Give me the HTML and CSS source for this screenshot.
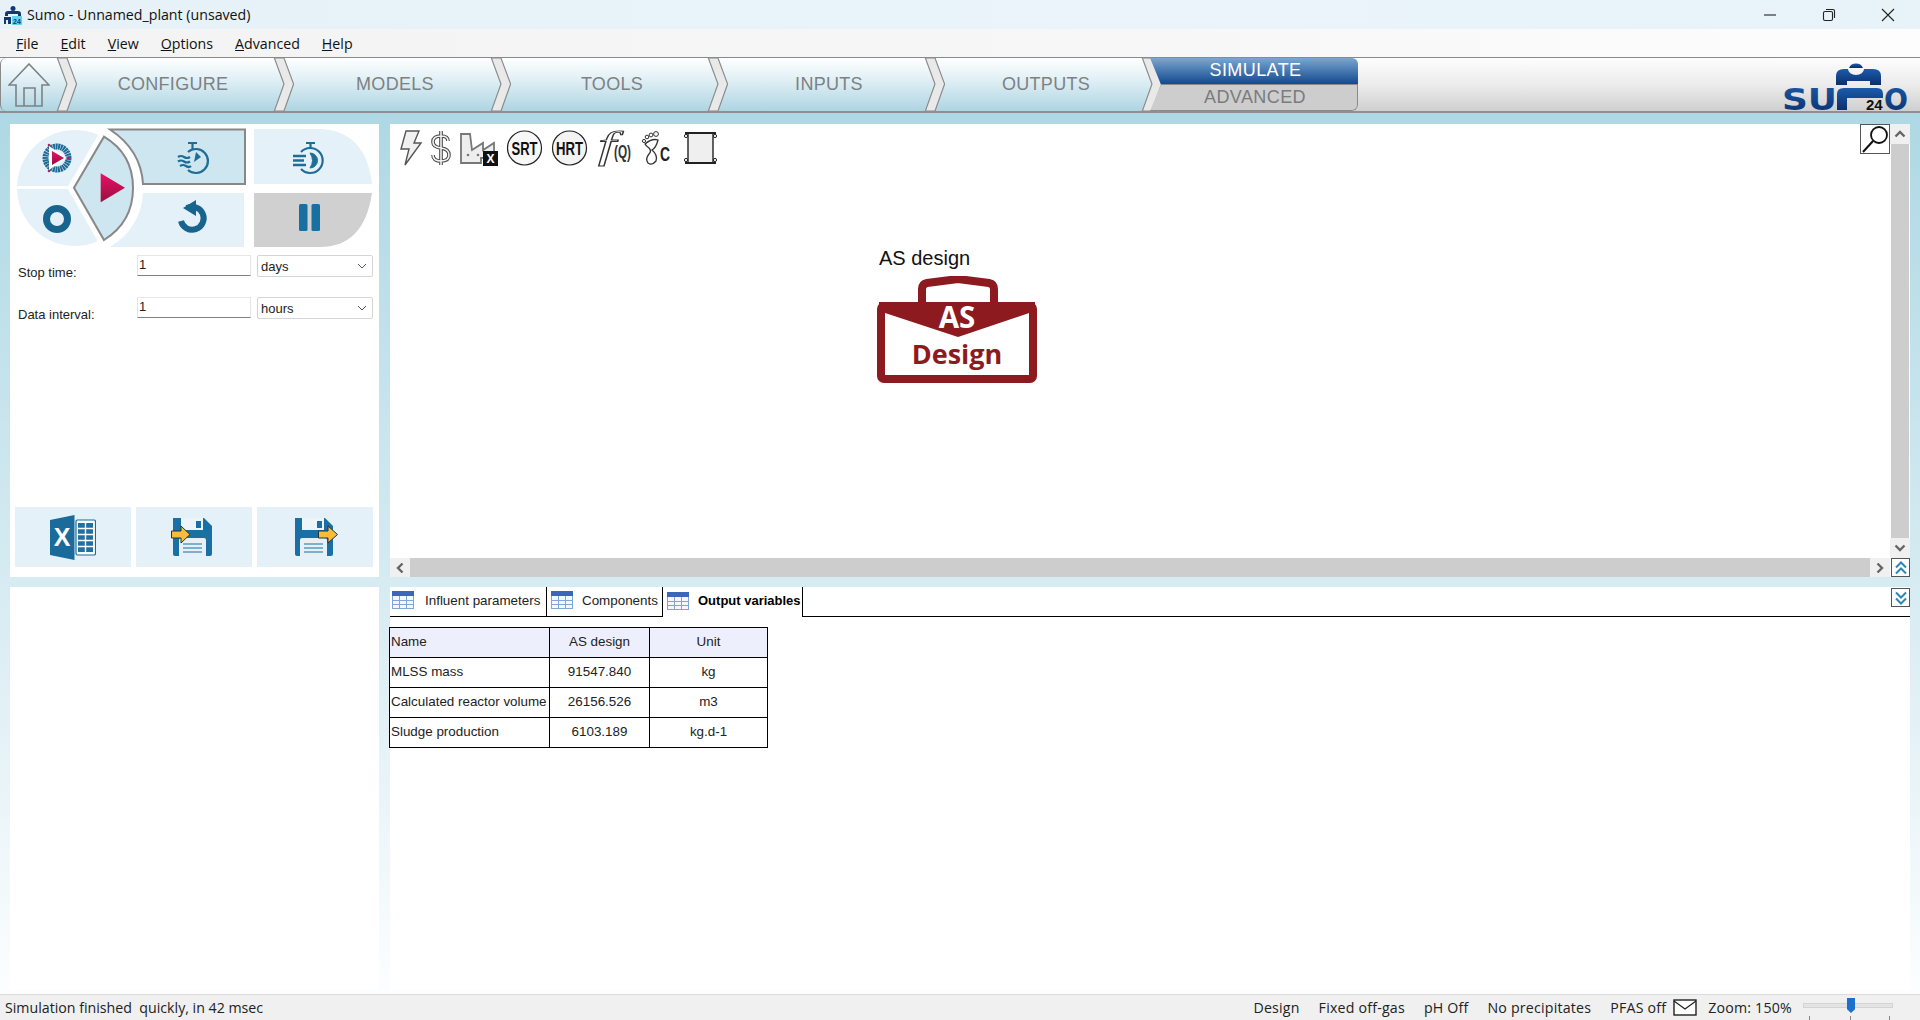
FILE: index.html
```html
<!DOCTYPE html>
<html lang="en">
<head>
    <meta charset="UTF-8">
    <title>Sumo - Unnamed_plant (unsaved)</title>
    <link rel="stylesheet" href="styles.css">
</head>
<body>
    <svg class="defs" width="0" height="0">
        <defs>
            <symbol id="chevron" viewBox="0 0 21 55">
                <path d="M1 0 L11 27 L1 55 H11 L21 27 L11 0 Z" fill="#e9e9e9" stroke="#8a8a8a" stroke-width="1.2"/>
            </symbol>
            <symbol id="grid" viewBox="0 0 22 18">
                <rect x="0.5" y="0.5" width="21" height="17" fill="#f4f8fd" stroke="#7fa6d6"/>
                <rect width="22" height="5" fill="#3c66b8"/>
                <path d="M7.5 5V18M14.5 5V18M0 9.5H22M0 13.5H22" stroke="#7fa6d6" fill="none"/>
            </symbol>
            <linearGradient id="playGrad" x1="0" y1="0" x2="0" y2="1">
                <stop offset="0" stop-color="#ea0f66"/>
                <stop offset="1" stop-color="#97103f"/>
            </linearGradient>
            <linearGradient id="logoGrad" x1="0" y1="0" x2="0" y2="1">
                <stop offset="0" stop-color="#1b5cab"/>
                <stop offset="1" stop-color="#0b2f6b"/>
            </linearGradient>
        </defs>
    </svg>

    <div class="titlebar">
        <svg class="app-icon" viewBox="0 0 20 20">
            <circle cx="10" cy="3.5" r="2.5" fill="#12386f"/>
            <path d="M2 9 Q2 6 5 6 H15 Q18 6 18 9 V11 H15 V9 H5 V11 H2Z" fill="#12386f"/>
            <path d="M1 12 H8 V19 H5 V15 H3 V19 H1Z" fill="#12386f"/>
            <rect x="9" y="11" width="10" height="9" fill="#5fd4ea"/>
            <text x="14" y="18.5" class="app-icon-num">24</text>
        </svg>
        <span class="title-text">Sumo - Unnamed_plant (unsaved)</span>
        <div class="window-btns">
            <svg width="14" height="14" viewBox="0 0 14 14"><path d="M1 7H13" stroke="#222" stroke-width="1.1"/></svg>
            <svg width="14" height="14" viewBox="0 0 14 14"><rect x="1.5" y="3.5" width="9" height="9" rx="1.5" fill="none" stroke="#222" stroke-width="1.1"/><path d="M4 1.5H11Q12.5 1.5 12.5 3V10" fill="none" stroke="#222" stroke-width="1.1"/></svg>
            <svg width="14" height="14" viewBox="0 0 14 14"><path d="M1 1L13 13M13 1L1 13" stroke="#222" stroke-width="1.1"/></svg>
        </div>
    </div>

    <div class="menubar">
        <a class="menu-item"><u>F</u>ile</a>
        <a class="menu-item"><u>E</u>dit</a>
        <a class="menu-item"><u>V</u>iew</a>
        <a class="menu-item"><u>O</u>ptions</a>
        <a class="menu-item"><u>A</u>dvanced</a>
        <a class="menu-item"><u>H</u>elp</a>
    </div>

    <nav class="nav">
        <div class="steps">
            <div class="home">
                <svg width="42" height="44" viewBox="0 0 42 44" fill="none" stroke="#7d8184" stroke-width="1.6">
                    <path d="M1 22 L21 1 L41 22 H34 V43 H8 V22 Z"/>
                    <path d="M16 43 V25 H27 V43"/>
                </svg>
            </div>
            <div class="step step-first"><svg class="chev"><use href="#chevron"/></svg><span class="step-label">CONFIGURE</span></div>
            <div class="step"><svg class="chev"><use href="#chevron"/></svg><span class="step-label">MODELS</span></div>
            <div class="step"><svg class="chev"><use href="#chevron"/></svg><span class="step-label">TOOLS</span></div>
            <div class="step"><svg class="chev"><use href="#chevron"/></svg><span class="step-label">INPUTS</span></div>
            <div class="step"><svg class="chev"><use href="#chevron"/></svg><span class="step-label">OUTPUTS</span></div>
            <svg class="chev"><use href="#chevron"/></svg>
        </div>
        <div class="sim-tab">
            <div class="sim-on">SIMULATE</div>
            <div class="sim-off">ADVANCED</div>
        </div>
        <svg class="logo" width="126" height="50" viewBox="0 0 126 50">
            <text x="0" y="49" class="logo-text" textLength="55" lengthAdjust="spacingAndGlyphs">SU</text>
            <text x="102" y="49" class="logo-text" textLength="24" lengthAdjust="spacingAndGlyphs">O</text>
            <path d="M67 7 A7.5 7 0 0 1 81 7 Z" fill="url(#logoGrad)"/>
            <path d="M54 24 V15 Q54 8 62 8 H66 A8 6 0 0 0 82 8 H91 Q99 8 99 15 V24 H88 V20 H65 V24 Z" fill="url(#logoGrad)"/>
            <path d="M55 49 V33 Q55 27 62 27 H95 Q101 27 101 33 V37 H65 V49 Z" fill="url(#logoGrad)"/>
            <text x="84" y="49" class="logo-num">24</text>
        </svg>
    </nav>

    <main class="workspace">
        <section class="panel side-top">
            <svg class="pad" width="369" height="125" viewBox="0 0 369 125">
                <!-- left disc -->
                <path d="M7 62 A58 58 0 0 1 95 14.4 L95 62 Z" fill="#e4f1f8"/>
                <path d="M7 65 A58 58 0 0 0 95 113.6 L95 65 Z" fill="#e4f1f8"/>
                <!-- other buttons -->
                <path d="M100 5.5 H235 V60 H133 Q131 26 100 5.5 Z" fill="#cde6ef" stroke="#888" stroke-width="2"/>
                <path d="M244 5 H310 Q356 7 362 60 H244 Z" fill="#e4f1f8"/>
                <path d="M133 69 H234 V123 H100 Q131 104 133 69 Z" fill="#e4f1f8"/>
                <path d="M244 69 H362 Q354 123 310 123 H244 Z" fill="#d0d0d0"/>
                <!-- run sector -->
                <path d="M64 63.7 L94 12.7 Q123 30 123 64 Q123 98 94 116 Z" fill="#fff" stroke="#fff" stroke-width="12"/>
                <path d="M64 63.7 L94 12.7 Q123 30 123 64 Q123 98 94 116 Z" fill="#cde6ef" stroke="#888" stroke-width="2"/>
                <path d="M90.7 49.3 L115 63.7 L90.7 78.3 Z" fill="url(#playGrad)"/>
                <!-- start from state -->
                <circle cx="47" cy="34" r="11.5" fill="none" stroke="#1f6a96" stroke-width="6" stroke-dasharray="2 0.5"/>
                <path d="M39 22 L57 34 L39 46 Z" fill="#fff"/>
                <path d="M42 27 L54 34 L42 41 Z" fill="url(#playGrad)"/>
                <circle cx="39" cy="21" r="1.3" fill="#c5185d"/><circle cx="58" cy="34" r="1.3" fill="#c5185d"/><circle cx="39" cy="47" r="1.3" fill="#c5185d"/>
                <!-- stop -->
                <circle cx="47" cy="95" r="10.5" fill="none" stroke="#17648f" stroke-width="7"/>
                <!-- fast timer -->
                <g fill="none" stroke="#1f6d96" stroke-width="2.2">
                    <path d="M178 28 A12 12 0 1 1 178 46"/>
                    <path d="M178 19H187M182.5 19V25"/>
                    <path d="M168 33 Q171 31 174 33 T180 33M168 37.5 Q171 35.5 174 37.5 T180 37.5M170 42 Q173 40 176 42 T181 42"/>
                </g>
                <path d="M184 38 L186 28 L191 33 Z" fill="#1f6d96"/>
                <!-- steady timer -->
                <g fill="none" stroke="#1f6d96" stroke-width="2.2">
                    <path d="M291 28 A12.5 12.5 0 1 1 291 45"/>
                    <path d="M296 19H305M300.5 19V24"/>
                </g>
                <path d="M283 32H296M283 36.5H294M283 41H296" stroke="#1f6d96" stroke-width="2.6"/>
                <path d="M300 29 A7.5 7.5 0 0 1 300 44 Q305 36.5 300 29 Z" fill="#1f6d96" stroke="#1f6d96" stroke-width="1"/>
                <!-- reset -->
                <path d="M177 84 A11.5 11.5 0 1 1 171 97" fill="none" stroke="#17648f" stroke-width="6"/>
                <path d="M186 76 V92 L173 84 Z" fill="#17648f"/>
                <!-- pause -->
                <rect x="289" y="80" width="8.5" height="27" rx="1.5" fill="#17709f"/>
                <rect x="301.5" y="80" width="8.5" height="27" rx="1.5" fill="#17709f"/>
            </svg>

            <div class="sim-form">
                <label class="form-label">Stop time:</label>
                <input class="form-input" type="text" value="1">
                <div class="form-select">days<svg width="10" height="6" viewBox="0 0 10 6"><path d="M1 1L5 5L9 1" fill="none" stroke="#555"/></svg></div>
                <label class="form-label">Data interval:</label>
                <input class="form-input" type="text" value="1">
                <div class="form-select">hours<svg width="10" height="6" viewBox="0 0 10 6"><path d="M1 1L5 5L9 1" fill="none" stroke="#555"/></svg></div>
            </div>

            <div class="export-row">
                <div class="export-btn">
                    <svg width="46" height="45" viewBox="0 0 46 45">
                        <rect x="26" y="5" width="19.5" height="35" rx="1.5" fill="#fff" stroke="#1a6a9c" stroke-width="1.2"/>
                        <rect x="28" y="8" width="15" height="29" fill="#1f6fa3"/>
                        <path d="M35.5 8V37M28 13.5H43M28 19.5H43M28 25.5H43M28 31.5H43" stroke="#fff" stroke-width="1.4"/>
                        <path d="M0 5 L24.5 0 V45 L0 40 Z" fill="#1a6a9c"/>
                        <text x="12" y="31" class="xl-letter">X</text>
                    </svg>
                </div>
                <div class="export-btn">
                    <svg width="46" height="38" viewBox="0 0 46 38">
                        <path d="M2 0 H33 L41 8 V36 Q41 38 39 38 H4 Q2 38 2 36 Z" fill="#1a70a5"/>
                        <rect x="10" y="0" width="22" height="12" fill="#eef5f9"/>
                        <rect x="25" y="3" width="5" height="7" fill="#1a70a5"/>
                        <path d="M8 38 V22 Q8 20 10 20 H33 Q35 20 35 22 V38 Z" fill="#e6f0f6"/>
                        <path d="M12 26H31M12 30H31M12 34H31" stroke="#5a9cc0" stroke-width="1.5"/>
                        <path d="M0.5 13 H10 V8 L19 16.5 L10 25 V20 H0.5 Z" fill="#f5bd3a" stroke="#234" stroke-width="1"/>
                    </svg>
                </div>
                <div class="export-btn">
                    <svg width="46" height="38" viewBox="0 0 46 38">
                        <path d="M3 0 H33 L41 8 V36 Q41 38 39 38 H5 Q3 38 3 36 Z" fill="#1a70a5"/>
                        <rect x="10" y="0" width="22" height="12" fill="#eef5f9"/>
                        <rect x="25" y="3" width="5" height="7" fill="#1a70a5"/>
                        <path d="M8 38 V22 Q8 20 10 20 H33 Q35 20 35 22 V38 Z" fill="#e6f0f6"/>
                        <path d="M12 26H31M12 30H31M12 34H31" stroke="#5a9cc0" stroke-width="1.5"/>
                        <path d="M26.5 13 H36 V8 L45.5 16.5 L36 25 V20 H26.5 Z" fill="#f5bd3a" stroke="#234" stroke-width="1"/>
                    </svg>
                </div>
            </div>
        </section>

        <section class="panel main-pane">
            <div class="canvas">
                <div class="toolbar">
                    <svg width="23" height="36" viewBox="0 0 23 36"><path d="M7 1 H20 L15 13 H22 L6 35 L10 19 H2 Z" fill="#f0f0f0" stroke="#555" stroke-width="1.4"/></svg>
                    <svg width="22" height="36" viewBox="0 0 22 36"><path d="M11 1V35M18 11 Q18 6 11 6 Q3 6 3 12 Q3 17 11 18 Q19 19 19 25 Q19 31 11 31 Q3 31 3 25" fill="none" stroke="#444" stroke-width="3.6"/><path d="M11 1V35M18 11 Q18 6 11 6 Q3 6 3 12 Q3 17 11 18 Q19 19 19 25 Q19 31 11 31 Q3 31 3 25" fill="none" stroke="#f2f2f2" stroke-width="1.6"/></svg>
                    <svg width="38" height="36" viewBox="0 0 38 36">
                        <path d="M1 4 H10 L12 20 L23 13 V20 L34 13 V28 H21 V33 H1 Z" fill="#eee" stroke="#777" stroke-width="1.8"/>
                        <circle cx="8" cy="25" r="1.3" fill="#777"/><circle cx="18" cy="25" r="1.3" fill="#777"/>
                        <rect x="23" y="21" width="15" height="15" fill="#111"/>
                        <text x="30.5" y="33" class="factory-x">X</text>
                    </svg>
                    <svg width="37" height="36" viewBox="0 0 37 36"><circle cx="18.5" cy="18" r="17" fill="#f7f7f7" stroke="#222" stroke-width="1.2"/><text x="5.5" y="25" class="ring-text" textLength="26" lengthAdjust="spacingAndGlyphs">SRT</text></svg>
                    <svg width="37" height="36" viewBox="0 0 37 36"><circle cx="18.5" cy="18" r="17" fill="#f3f3f3" stroke="#222" stroke-width="1.2"/><text x="5" y="25" class="ring-text" textLength="27" lengthAdjust="spacingAndGlyphs">HRT</text></svg>
                    <svg width="37" height="36" viewBox="0 0 37 36"><text x="2" y="28" class="fq-f" textLength="18" lengthAdjust="spacingAndGlyphs">f</text><text x="18" y="28" class="fq-q" textLength="17" lengthAdjust="spacingAndGlyphs">(Q)</text></svg>
                    <svg width="31" height="36" viewBox="0 0 31 36">
                        <g fill="#fff" stroke="#333"><circle cx="3" cy="11" r="1.6"/><circle cx="6" cy="7" r="1.8"/><circle cx="10" cy="5" r="1.9"/><circle cx="15" cy="4" r="2.4"/></g>
                        <path d="M4 14 Q11 8 17 10 Q15 18 11 20 Q17 25 15 31 Q11 36 7 33 Q4 29 8 24 Q11 21 8 18 Q5 16 4 14 Z" fill="#fff" stroke="#333" stroke-width="1.3"/>
                        <text x="19" y="31" class="foot-c" textLength="10" lengthAdjust="spacingAndGlyphs">C</text>
                    </svg>
                    <svg width="38" height="36" viewBox="0 0 38 36">
                        <rect x="8" y="3" width="25" height="30" fill="#efefef" stroke="#222" stroke-width="1.4"/>
                        <path d="M5 3H36M5 33H36" stroke="#222" stroke-width="2"/>
                        <circle cx="6" cy="6" r="1.6" fill="#fff" stroke="#222"/><circle cx="35" cy="6" r="1.6" fill="#fff" stroke="#222"/>
                        <circle cx="6" cy="30" r="1.6" fill="#fff" stroke="#222"/><circle cx="35" cy="30" r="1.6" fill="#fff" stroke="#222"/>
                    </svg>
                </div>

                <div class="node">
                    <span class="node-label">AS design</span>
                    <svg width="160" height="107" viewBox="0 0 160 107">
                        <path d="M45 27 V13 Q45 8 50 7 L81 3 L112 7 Q117 8 117 13 V27" fill="none" stroke="#8c1a1e" stroke-width="8"/>
                        <rect x="4" y="30" width="152" height="73" rx="3" fill="#fff" stroke="#8c1a1e" stroke-width="8"/>
                        <path d="M2 26 H158 V35 L81 61 L2 35 Z" fill="#8c1a1e"/>
                        <text x="80" y="52" class="as-top">AS</text>
                        <text x="80" y="88" class="as-bottom">Design</text>
                    </svg>
                </div>

                <div class="magnifier">
                    <svg width="28" height="28" viewBox="0 0 28 28"><circle cx="18" cy="10" r="8" fill="none" stroke="#111" stroke-width="1.8"/><path d="M12 16 L2 27" stroke="#111" stroke-width="2"/></svg>
                </div>
            </div>
            <div class="vscroll">
                <div class="arrow-cell"><svg width="12" height="8" viewBox="0 0 12 8"><path d="M1.5 6.5L6 2L10.5 6.5" fill="none" stroke="#666" stroke-width="2.4"/></svg></div>
                <div class="vthumb"></div>
                <div class="arrow-cell"><svg width="12" height="8" viewBox="0 0 12 8"><path d="M1.5 1.5L6 6L10.5 1.5" fill="none" stroke="#666" stroke-width="2.4"/></svg></div>
            </div>
            <div class="hscroll">
                <div class="arrow-cell"><svg width="8" height="12" viewBox="0 0 8 12"><path d="M6.5 1.5L2 6L6.5 10.5" fill="none" stroke="#666" stroke-width="2.4"/></svg></div>
                <div class="hthumb"></div>
                <div class="arrow-cell"><svg width="8" height="12" viewBox="0 0 8 12"><path d="M1.5 1.5L6 6L1.5 10.5" fill="none" stroke="#666" stroke-width="2.4"/></svg></div>
            </div>
            <div class="pane-btn">
                <svg width="14" height="14" viewBox="0 0 14 14"><path d="M2 6.5L7 1.5L12 6.5M2 12.5L7 7.5L12 12.5" fill="none" stroke="#2b87b8" stroke-width="2"/></svg>
            </div>
        </section>

        <section class="panel side-bottom"></section>

        <section class="panel output-pane">
            <div class="tabs">
                <div class="tab tab-influent"><svg width="22" height="18"><use href="#grid"/></svg><span>Influent parameters</span></div>
                <div class="tab tab-components"><svg width="22" height="18"><use href="#grid"/></svg><span>Components</span></div>
                <div class="tab tab-outputs active"><svg width="22" height="18"><use href="#grid"/></svg><span>Output variables</span></div>
                <div class="tabs-line"></div>
            </div>
            <div class="pane-btn collapse-btn">
                <svg width="14" height="14" viewBox="0 0 14 14"><path d="M2 1.5L7 6.5L12 1.5M2 7.5L7 12.5L12 7.5" fill="none" stroke="#2b87b8" stroke-width="2"/></svg>
            </div>
            <table class="results">
                <tr class="head"><td class="name">Name</td><td>AS design</td><td>Unit</td></tr>
                <tr><td class="name">MLSS mass</td><td>91547.840</td><td>kg</td></tr>
                <tr><td class="name">Calculated reactor volume</td><td>26156.526</td><td>m3</td></tr>
                <tr><td class="name">Sludge production</td><td>6103.189</td><td>kg.d-1</td></tr>
            </table>
        </section>
    </main>

    <footer class="statusbar">
        <span>Simulation finished&nbsp; quickly, in 42 msec</span>
        <div class="status-right">
            <span>Design</span>
            <span>Fixed off-gas</span>
            <span>pH Off</span>
            <span>No precipitates</span>
            <span>PFAS off</span>
            <svg class="envelope" width="24" height="17" viewBox="0 0 24 17"><rect x="1" y="1" width="22" height="15" fill="#fff" stroke="#222" stroke-width="1.4"/><path d="M1 2L12 10L23 2" fill="none" stroke="#222" stroke-width="1.2"/></svg>
            <span class="zoom-text">Zoom: 150%</span>
            <div class="slider">
                <div class="slider-track"></div>
                <div class="slider-thumb"></div>
                <i class="tick tick-a"></i><i class="tick tick-b"></i><i class="tick tick-c"></i>
            </div>
        </div>
    </footer>
</body>
</html>
```

FILE: styles.css
```css
* {
    box-sizing: border-box;
}

html, body {
    margin: 0;
    height: 100%;
}

body {
    width: 1920px;
    height: 1020px;
    display: flex;
    flex-direction: column;
    overflow: hidden;
    font-family: "Liberation Sans", Arial, sans-serif;
    background: #fff;
    color: #111;
}

.defs {
    position: absolute;
}

/* window chrome */
.titlebar {
    height: 29px;
    flex: none;
    display: flex;
    align-items: center;
    padding-left: 3px;
    background: linear-gradient(90deg, #e6f1f8, #eaf4fa 60%, #e8f3f9);
    font-family: "Open Sans", sans-serif;
    font-size: 14.2px;
}

.app-icon {
    width: 20px;
    height: 20px;
    margin-right: 4px;
}

.app-icon-num {
    font: bold 7px "Liberation Sans", sans-serif;
    text-anchor: middle;
    fill: #12386f;
}

.window-btns {
    margin-left: auto;
    display: flex;
    gap: 45px;
    padding-right: 25px;
}

.menubar {
    height: 28px;
    flex: none;
    display: flex;
    align-items: center;
    padding-left: 16px;
    gap: 22px;
    background: linear-gradient(90deg, #f3f3f3, #f7f7f7 60%, #fdfdfd);
    font-family: "Open Sans", sans-serif;
    font-size: 14.2px;
}

/* workflow nav */
.nav {
    height: 56px;
    flex: none;
    display: flex;
    border-top: 1px solid #8a8a8a;
    border-bottom: 2px solid #8f8f8f;
    background: linear-gradient(#fdfdfd, #ececec 50%, #cfcfcf);
}

.steps {
    display: flex;
    background: linear-gradient(#ffffff, #e1f0f5 40%, #aed5e3);
}

.home {
    width: 56px;
    display: flex;
    align-items: center;
    justify-content: center;
    padding-left: 1px;
    border-left: 1px solid #8a8a8a;
    border-radius: 6px 0 0 6px;
}

.step {
    width: 217px;
    display: flex;
}

.chev {
    width: 21px;
    height: 53px;
    flex: none;
}

.step-label {
    flex: 1;
    padding-left: 6px;
    text-align: center;
    line-height: 53px;
    font-size: 18px;
    letter-spacing: 0.3px;
    color: #7d8184;
}

.step-first .step-label {
    padding-left: 0;
    padding-right: 4px;
}

.sim-tab {
    width: 208px;
    margin-left: -12px;
    display: flex;
    flex-direction: column;
    text-align: center;
    font-size: 18px;
    letter-spacing: 0.4px;
    border-radius: 0 6px 6px 0;
    overflow: hidden;
    clip-path: polygon(0 0, 100% 0, 100% 100%, 0 100%, 11px 50%);
}

.sim-on {
    height: 27px;
    line-height: 25px;
    padding-left: 3px;
    color: #fff;
    background: linear-gradient(#7ba6cf, #124a90);
}

.sim-off {
    flex: 1;
    line-height: 25px;
    padding-left: 3px;
    color: #7b7b7b;
    background: #cdcdcd;
    border-top: 1px solid #8a8a8a;
    border-right: 1px solid #8a8a8a;
    border-bottom: 1px solid #8a8a8a;
    border-radius: 0 0 6px 0;
}

.logo {
    margin-left: auto;
    margin-right: 12px;
    margin-top: 3px;
    overflow: visible;
}

.logo-text {
    font: bold 31px "DejaVu Sans", sans-serif;
    fill: url(#logoGrad);
}

.logo-num {
    font: bold 15px "Liberation Sans", sans-serif;
    fill: #111;
}

/* work area */
.workspace {
    flex: 1;
    min-height: 0;
    display: grid;
    grid-template-columns: 369px 1520px;
    grid-template-rows: 453px 1fr;
    column-gap: 11px;
    row-gap: 10px;
    padding: 11px 0 4px 10px;
    background: linear-gradient(#aed8e5, #d6ebf2 53%, #fbfdfe 98%);
}

.panel {
    background: #fff;
    min-height: 0;
}

.side-top {
    display: flex;
    flex-direction: column;
    padding: 0 5px 10px 0;
}

.pad {
    flex: none;
}

.sim-form {
    margin-top: 6px;
    padding-left: 8px;
    display: grid;
    grid-template-columns: 113px 114px 116px;
    grid-auto-rows: 22px;
    column-gap: 6px;
    row-gap: 20px;
    font-size: 13px;
}

.form-label {
    padding-top: 10px;
    line-height: 16px;
    white-space: nowrap;
    color: #222;
}

.form-input {
    height: 21px;
    width: 100%;
    padding: 0 1px 2px;
    border: 1px solid #e6e6e6;
    border-bottom: 1px solid #808080;
    font: 13px "Liberation Sans", sans-serif;
    color: #222;
    outline: none;
}

.form-select {
    display: flex;
    align-items: center;
    justify-content: space-between;
    padding: 0 5px 0 3px;
    border: 1px solid #d4d4d4;
    border-radius: 2px;
    color: #222;
}

.export-row {
    margin-top: auto;
    padding-left: 5px;
    display: flex;
    gap: 5px;
}

.export-btn {
    width: 116px;
    height: 60px;
    display: flex;
    align-items: center;
    justify-content: center;
    background: #e4f1f8;
}

.xl-letter {
    font: bold 25px "Liberation Sans", sans-serif;
    text-anchor: middle;
    fill: #fff;
}

/* main canvas */
.main-pane {
    display: grid;
    grid-template-columns: 1fr 20px;
    grid-template-rows: 1fr 19px;
}

.canvas {
    position: relative;
    overflow: hidden;
}

.toolbar {
    display: flex;
    gap: 8px;
    padding: 6px 0 0 9px;
}

.toolbar svg {
    flex: none;
    overflow: visible;
}

.factory-x {
    font: bold 12px "Liberation Sans", sans-serif;
    text-anchor: middle;
    fill: #fff;
}

.ring-text {
    font: bold 19px "Liberation Sans", sans-serif;
    fill: #111;
}

.fq-f {
    font: italic 38px "Liberation Serif", serif;
    fill: #fff;
    stroke: #333;
    stroke-width: 0.9px;
}

.fq-q {
    font: bold 19px "Liberation Sans", sans-serif;
    fill: #333;
}

.foot-c {
    font: bold 21px "Liberation Sans", sans-serif;
    fill: #222;
}

.node {
    position: absolute;
    left: 487px;
    top: 122px;
    display: flex;
    flex-direction: column;
    gap: 6px;
}

.node-label {
    margin-left: 2px;
    font-size: 20px;
    line-height: 24px;
    color: #111;
}

.as-top {
    font: bold 29.5px "Open Sans", sans-serif;
    text-anchor: middle;
    fill: #fff;
}

.as-bottom {
    font: bold 27px "Open Sans", sans-serif;
    text-anchor: middle;
    fill: #8c1a1e;
}

.magnifier {
    position: absolute;
    right: 0;
    top: 0;
    width: 30px;
    height: 30px;
    display: flex;
    align-items: center;
    justify-content: center;
    border: 1px solid #555;
    background: #fff;
}

.vscroll {
    display: flex;
    flex-direction: column;
}

.arrow-cell {
    flex: none;
    min-width: 20px;
    min-height: 20px;
    display: flex;
    align-items: center;
    justify-content: center;
    background: #f0f0f0;
}

.vthumb {
    flex: 1;
    margin: 0 1px;
    background: #cdcdcd;
}

.hscroll {
    display: flex;
    height: 19px;
}

.hscroll .arrow-cell {
    min-height: 19px;
}

.hthumb {
    flex: 1;
    background: #cdcdcd;
}

.pane-btn {
    width: 19px;
    height: 19px;
    margin-left: 1px;
    display: flex;
    align-items: center;
    justify-content: center;
    border: 1px solid #555;
    background: #fff;
}

/* output tables */
.output-pane {
    position: relative;
    padding-bottom: 10px;
}

.tabs {
    height: 30px;
    display: flex;
    font-size: 13.4px;
}

.tab {
    flex: none;
    display: flex;
    align-items: center;
    padding: 0 0 3px 4px;
    border-bottom: 1px solid #000;
    border-right: 1px solid #000;
    color: #222;
    white-space: nowrap;
}

.tab svg {
    flex: none;
}

.tab-influent {
    width: 157px;
    padding-left: 2px;
    gap: 11px;
}

.tab-components {
    width: 116px;
    gap: 9px;
}

.tab-outputs {
    width: 140px;
    gap: 9px;
}

.tab.active {
    border-bottom: none;
    font-weight: bold;
    font-size: 13px;
    color: #000;
}

.tabs-line {
    flex: 1;
    border-bottom: 1px solid #000;
}

.collapse-btn {
    position: absolute;
    right: 0;
    top: 1px;
}

.results {
    margin: 10px 0 0 -1px;
    width: 379px;
    table-layout: fixed;
    border-collapse: collapse;
    font-size: 13.4px;
    color: #222;
}

.results td {
    height: 30px;
    padding: 0 1px 2px;
    border: 1px solid #000;
    text-align: center;
    white-space: nowrap;
}

.results td:nth-child(1) {
    width: 160px;
}

.results td:nth-child(2) {
    width: 100px;
}

.results td.name {
    text-align: left;
}

.results .head td {
    background: #eeeffd;
}

/* status bar */
.statusbar {
    height: 26px;
    flex: none;
    display: flex;
    align-items: center;
    padding: 0 27px 0 5px;
    background: #f0f0f0;
    border-top: 1px solid #dcdcdc;
    font-family: "Open Sans", sans-serif;
    font-size: 14.2px;
    color: #222;
}

.status-right {
    margin-left: auto;
    display: flex;
    align-items: center;
    gap: 19px;
    letter-spacing: 0.2px;
}

.envelope {
    margin-left: -12px;
}

.zoom-text {
    margin-left: -8px;
}

.slider {
    position: relative;
    width: 90px;
    height: 25px;
    margin-left: -8px;
}

.slider-track {
    position: absolute;
    left: 0;
    right: 0;
    top: 8px;
    height: 5px;
    background: #e4e4e4;
    border: 1px solid #d4d4d4;
}

.slider-thumb {
    position: absolute;
    left: 44px;
    top: 3px;
    width: 8px;
    height: 15px;
    background: #1d6fce;
    clip-path: polygon(0 0, 100% 0, 100% 75%, 50% 100%, 0 75%);
}

.tick {
    position: absolute;
    bottom: 0;
    width: 1px;
    height: 4px;
    background: #888;
}

.tick-a {
    left: 6px;
}

.tick-b {
    left: 47px;
}

.tick-c {
    left: 86px;
}
```
